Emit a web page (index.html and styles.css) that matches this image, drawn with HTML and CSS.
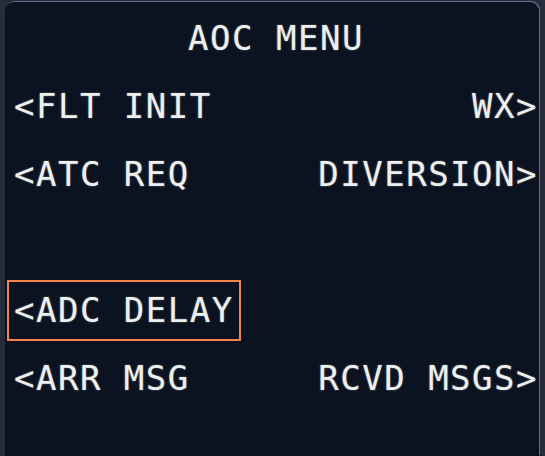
FILE: index.html
```html
<!DOCTYPE html>
<html>

<head>
  <link rel="stylesheet" href="styles.css">
</head>

<body>
  <div class="mcdu">
    <div class="mcdu-screen">
      <div class="mcdu-title">AOC MENU</div>

      <div class="mcdu-row">
        <span class="lsk">&lt;FLT INIT</span>
        <span class="rsk">WX&gt;</span>
      </div>
      <div class="mcdu-row">
        <span class="lsk">&lt;ATC REQ</span>
        <span class="rsk">DIVERSION&gt;</span>
      </div>
      <div class="mcdu-row"></div>
      <div class="mcdu-row">
        <span class="lsk selected">&lt;ADC DELAY</span>
      </div>
      <div class="mcdu-row">
        <span class="lsk">&lt;ARR MSG</span>
        <span class="rsk">RCVD MSGS&gt;</span>
      </div>
    </div>
  </div>
</body>

</html>
```

FILE: styles.css
```css
html,
body {
  margin: 0;
  height: 100%;
}

body {
  background-color: #262c39;
  overflow: hidden;
}

.mcdu {
  height: 100%;
  padding: 2px 6px 0 5px;
  box-sizing: border-box;
}

.mcdu-screen {
  height: 100%;
  background-color: #0b1220;
  border-radius: 9px 9px 0 0;
  box-shadow: 1px -1px 0 #5d6e8c;
  padding: 16px 1px 0 9px;
  box-sizing: border-box;
  font-family: "DejaVu Sans Mono", monospace;
  font-size: 34px;
  letter-spacing: 1.5px;
  line-height: 40px;
  color: #eef0ee;
  text-shadow: 0 0 2px rgba(230, 236, 240, 0.45);
}

.mcdu-title {
  text-align: center;
  height: 68px;
}

.mcdu-row {
  display: flex;
  justify-content: space-between;
  align-items: flex-start;
  height: 68px;
}

/* currently highlighted line select key */
.lsk.selected {
  outline: 2px solid #f5844a;
  padding: 8px 5px 9px 5px;
  margin: -8px 0 0 -5px;
}
```
